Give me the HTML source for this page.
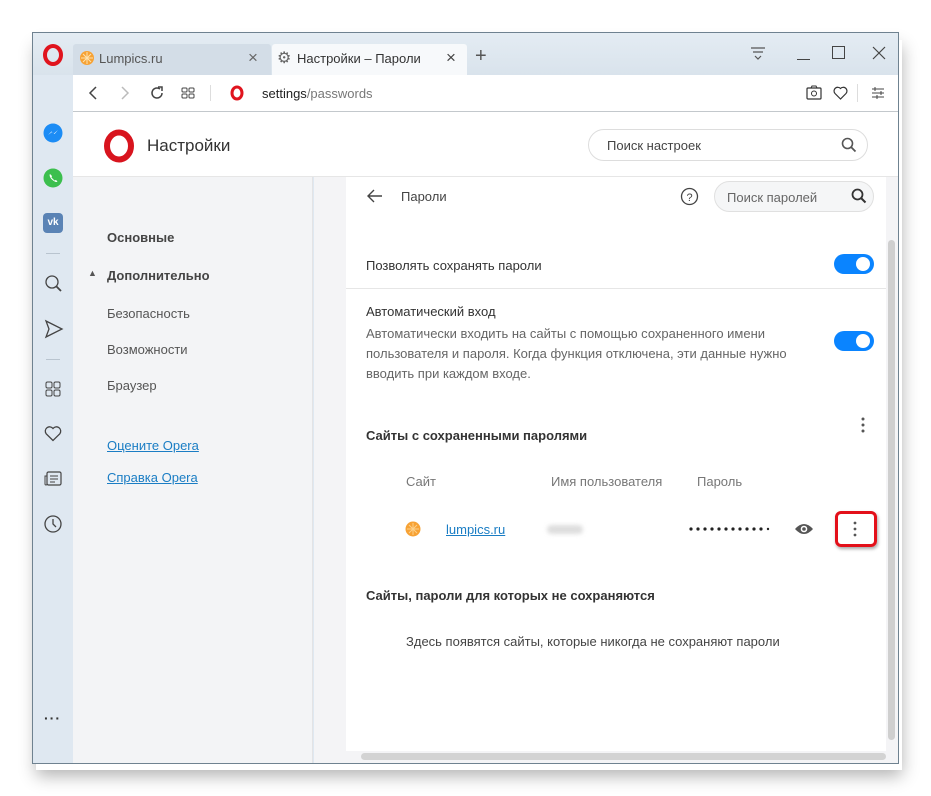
<!DOCTYPE html>
<html><head><meta charset="utf-8"><style>
*{margin:0;padding:0;box-sizing:border-box}
body{width:931px;height:796px;background:#fff;position:relative;overflow:hidden;font-family:"Liberation Sans","Noto Sans CJK SC",sans-serif;color:#333}
.a{position:absolute}
.t{position:absolute;white-space:nowrap;font-size:13px}
svg{position:absolute;overflow:visible}
</style></head><body>
<div class="a" style="left:36px;top:40px;width:866px;height:730px;box-shadow:0 6px 16px rgba(0,0,0,.3)"></div>
<div class="a" style="left:32px;top:32px;width:867px;height:732px;border:1px solid #6f8290;background:#dfe8f1"></div>
<div class="a" style="left:33px;top:33px;width:865px;height:42px;background:linear-gradient(#e4ecf3,#d9e3ec)"></div>
<svg style="left:43px;top:44px" width="20" height="22"><ellipse cx="10" cy="11" rx="8" ry="9" fill="none" stroke="#e0141e" stroke-width="4"/></svg>
<div class="a" style="left:73px;top:44px;width:198px;height:31px;background:#d3dde7;border-radius:3px 3px 0 0"></div>
<svg style="left:79px;top:50px" width="16" height="16"><circle cx="8" cy="8" r="7" fill="#f7a234"/><path d="M8 2v12M2 8h12M4 4l8 8M12 4l-8 8" stroke="#fde2b0" stroke-width="1"/></svg>
<div class="t" style="left:99px;top:51px;color:#555">Lumpics.ru</div>
<div class="t" style="left:248px;top:48px;font-size:17px;color:#666">×</div>
<div class="a" style="left:272px;top:44px;width:195px;height:31px;background:#f7f9fb;border-radius:3px 3px 0 0"></div>
<div class="t" style="left:277px;top:48px;font-size:16px;color:#666">⚙</div>
<div class="t" style="left:297px;top:51px;color:#333">Настройки – Пароли</div>
<div class="t" style="left:446px;top:48px;font-size:17px;color:#444">×</div>
<div class="t" style="left:475px;top:45px;font-size:20px;color:#555">+</div>
<svg style="left:750px;top:46px" width="16" height="14"><path d="M1 2h14M3 6h10M5 10l3 3 3-3" stroke="#555" fill="none" stroke-width="1.2"/></svg>
<div class="a" style="left:797px;top:59px;width:13px;height:1px;background:#444"></div>
<div class="a" style="left:832px;top:46px;width:13px;height:13px;border:1px solid #444"></div>
<svg style="left:872px;top:46px" width="14" height="14"><path d="M1 1l12 12M13 1L1 13" stroke="#444" stroke-width="1.2"/></svg>
<div class="a" style="left:73px;top:75px;width:825px;height:37px;background:#fff;border-bottom:1px solid #c3c8cc"></div>
<svg style="left:88px;top:86px" width="10" height="14"><path d="M8 1L2 7l6 6" stroke="#444" fill="none" stroke-width="1.5"/></svg>
<svg style="left:120px;top:86px" width="10" height="14"><path d="M2 1l6 6-6 6" stroke="#bbb" fill="none" stroke-width="1.5"/></svg>
<svg style="left:149px;top:85px" width="16" height="16"><path d="M13 8a5 5 0 1 1-2-4" stroke="#444" fill="none" stroke-width="1.5"/><path d="M9 2h4v4" stroke="#444" fill="none" stroke-width="1.5"/></svg>
<svg style="left:181px;top:87px" width="14" height="12"><rect x="1" y="1" width="5" height="4" rx="1" fill="none" stroke="#444"/><rect x="8" y="1" width="5" height="4" rx="1" fill="none" stroke="#444"/><rect x="1" y="7" width="5" height="4" rx="1" fill="none" stroke="#444"/><rect x="8" y="7" width="5" height="4" rx="1" fill="none" stroke="#444"/></svg>
<div class="a" style="left:210px;top:85px;width:1px;height:16px;background:#ddd"></div>
<svg style="left:230px;top:85px" width="14" height="16"><ellipse cx="7" cy="8" rx="5" ry="6" fill="none" stroke="#e0141e" stroke-width="3"/></svg>
<div class="t" style="left:262px;top:86px;color:#222">settings<span style="color:#777">/passwords</span></div>
<svg style="left:806px;top:85px" width="16" height="15"><rect x="1" y="3" width="14" height="11" rx="1" fill="none" stroke="#333" stroke-width="1.2"/><circle cx="8" cy="8.5" r="2.5" fill="none" stroke="#333"/><path d="M5 3l1-2h4l1 2" stroke="#333" fill="none"/></svg>
<svg style="left:833px;top:86px" width="15" height="14"><path d="M7.5 13L2 7.5A3.3 3.3 0 0 1 7.5 2.5 3.3 3.3 0 0 1 13 7.5z" stroke="#333" fill="none" stroke-width="1.2"/></svg>
<div class="a" style="left:857px;top:84px;width:1px;height:18px;background:#ddd"></div>
<svg style="left:871px;top:86px" width="14" height="14"><path d="M1 3h12M1 7h12M1 11h12M4 1v4M10 5v4M6 9v4" stroke="#444" stroke-width="1"/></svg>
<svg style="left:43px;top:123px" width="20" height="20"><circle cx="10" cy="10" r="9.5" fill="#1c8cf5"/><path d="M5 12l3.5-3.5 2.5 2 4-3.5-3.5 4-2.5-2z" fill="#fff"/></svg>
<svg style="left:43px;top:168px" width="20" height="20"><circle cx="10" cy="10" r="9.5" fill="#3cbf4e"/><path d="M7 6c-1 1 0 4 2.5 6s4 2.5 5 1.5l-1.5-1.5-1.5.5-3-3 .5-1.5z" fill="#fff"/></svg>
<div class="a" style="left:43px;top:213px;width:20px;height:20px;background:#5a83b5;border-radius:4px;color:#fff;font-size:10px;font-weight:bold;text-align:center;line-height:20px">vk</div>
<div class="a" style="left:46px;top:253px;width:14px;height:1px;background:#b9c4cf"></div>
<svg style="left:44px;top:274px" width="20" height="20"><circle cx="8" cy="8" r="6" fill="none" stroke="#444" stroke-width="1.3"/><path d="M12.5 12.5L17 17" stroke="#444" stroke-width="1.8"/></svg>
<svg style="left:44px;top:319px" width="20" height="20"><path d="M2 2l16 8-16 8 3-8z" stroke="#444" fill="none" stroke-width="1.3"/></svg>
<div class="a" style="left:46px;top:359px;width:14px;height:1px;background:#b9c4cf"></div>
<svg style="left:45px;top:381px" width="16" height="16"><rect x="1" y="1" width="6" height="6" rx="1.5" fill="none" stroke="#444"/><rect x="9" y="1" width="6" height="6" rx="1.5" fill="none" stroke="#444"/><rect x="1" y="9" width="6" height="6" rx="1.5" fill="none" stroke="#444"/><rect x="9" y="9" width="6" height="6" rx="1.5" fill="none" stroke="#444"/></svg>
<svg style="left:44px;top:425px" width="18" height="17"><path d="M9 15.5L2.2 8.8A3.8 3.8 0 0 1 9 3.5 3.8 3.8 0 0 1 15.8 8.8z" stroke="#444" fill="none" stroke-width="1.3"/></svg>
<svg style="left:44px;top:471px" width="18" height="16"><rect x="3" y="1" width="14" height="13" rx="1.5" fill="none" stroke="#444" stroke-width="1.2"/><path d="M3 5H1v8a1 1 0 0 0 2 0M6 5h8M6 8h8M6 11h5" stroke="#444" fill="none"/></svg>
<svg style="left:43px;top:514px" width="20" height="20"><circle cx="10" cy="10" r="8" fill="none" stroke="#444" stroke-width="1.3"/><path d="M10 5v5l3 3" stroke="#444" fill="none" stroke-width="1.3"/></svg>
<div class="t" style="left:44px;top:710px;font-size:14px;color:#333;letter-spacing:1px;font-weight:bold">···</div>
<div class="a" style="left:73px;top:112px;width:825px;height:65px;background:#fff;border-bottom:1px solid #e6e6e6"></div>
<svg style="left:103px;top:130px" width="32" height="32"><ellipse cx="16" cy="16" rx="12" ry="13.5" fill="none" stroke="#d8141e" stroke-width="6"/></svg>
<div class="t" style="left:147px;top:136px;font-size:17px;color:#333">Настройки</div>
<div class="a" style="left:588px;top:129px;width:280px;height:32px;border:1px solid #ddd;border-radius:16px;background:#fff"></div>
<div class="t" style="left:607px;top:138px;color:#444">Поиск настроек</div>
<svg style="left:841px;top:137px" width="16" height="16"><circle cx="6.5" cy="6.5" r="5" fill="none" stroke="#555" stroke-width="1.6"/><path d="M10 10l4.5 4.5" stroke="#555" stroke-width="1.8"/></svg>
<div class="a" style="left:73px;top:177px;width:240px;height:586px;background:#f3f4f6;border-right:1px solid #e3e3e5"></div>
<div class="a" style="left:314px;top:177px;width:584px;height:586px;background:#f4f4f6"></div>
<div class="t" style="left:107px;top:230px;font-weight:bold;color:#444">Основные</div>
<div class="t" style="left:88px;top:268px;font-size:9px;color:#555">▲</div>
<div class="t" style="left:107px;top:268px;font-weight:bold;color:#444">Дополнительно</div>
<div class="t" style="left:107px;top:306px;color:#555">Безопасность</div>
<div class="t" style="left:107px;top:342px;color:#555">Возможности</div>
<div class="t" style="left:107px;top:378px;color:#555">Браузер</div>
<div class="t" style="left:107px;top:438px;color:#1a7dc4;text-decoration:underline">Оцените Opera</div>
<div class="t" style="left:107px;top:470px;color:#1a7dc4;text-decoration:underline">Справка Opera</div>
<div class="a" style="left:346px;top:177px;width:540px;height:574px;background:#fff"></div>
<svg style="left:367px;top:189px" width="16" height="14"><path d="M15 7H2M7 1L1 7l6 6" stroke="#444" fill="none" stroke-width="1.4"/></svg>
<div class="t" style="left:401px;top:189px;color:#444">Пароли</div>
<svg style="left:680px;top:187px" width="19" height="19"><circle cx="9.5" cy="9.5" r="8" fill="none" stroke="#444" stroke-width="1.3"/><text x="9.5" y="14" font-size="11" text-anchor="middle" fill="#444" font-family="Liberation Sans">?</text></svg>
<div class="a" style="left:714px;top:181px;width:160px;height:31px;border:1px solid #e0e0e0;border-radius:16px;background:#f5f6f7"></div>
<div class="t" style="left:727px;top:190px;color:#666">Поиск паролей</div>
<svg style="left:851px;top:188px" width="16" height="16"><circle cx="6.5" cy="6.5" r="5" fill="none" stroke="#333" stroke-width="1.8"/><path d="M10 10l4.5 4.5" stroke="#333" stroke-width="2"/></svg>
<div class="t" style="left:366px;top:258px;color:#333">Позволять сохранять пароли</div>
<div class="a" style="left:834px;top:254px;width:40px;height:20px;border-radius:10px;background:#0a84ff"></div>
<div class="a" style="left:856px;top:257px;width:14px;height:14px;border-radius:7px;background:#fff"></div>
<div class="a" style="left:346px;top:288px;width:540px;height:1px;background:#e6e6e6"></div>
<div class="t" style="left:366px;top:304px;color:#333">Автоматический вход</div>
<div class="t" style="left:366px;top:324px;color:#666;line-height:20px">Автоматически входить на сайты с помощью сохраненного имени<br>пользователя и пароля. Когда функция отключена, эти данные нужно<br>вводить при каждом входе.</div>
<div class="a" style="left:834px;top:331px;width:40px;height:20px;border-radius:10px;background:#0a84ff"></div>
<div class="a" style="left:856px;top:334px;width:14px;height:14px;border-radius:7px;background:#fff"></div>
<div class="t" style="left:366px;top:428px;color:#333;font-weight:600">Сайты с сохраненными паролями</div>
<svg style="left:861px;top:417px" width="4" height="16"><circle cx="2" cy="2" r="1.5" fill="#555"/><circle cx="2" cy="8" r="1.5" fill="#555"/><circle cx="2" cy="14" r="1.5" fill="#555"/></svg>
<div class="t" style="left:406px;top:474px;color:#777">Сайт</div>
<div class="t" style="left:551px;top:474px;color:#777">Имя пользователя</div>
<div class="t" style="left:697px;top:474px;color:#777">Пароль</div>
<svg style="left:405px;top:521px" width="16" height="16"><circle cx="8" cy="8" r="7.5" fill="#f7a234"/><path d="M8 2v12M2 8h12M4 4l8 8M12 4l-8 8" stroke="#fcd08a" stroke-width="1"/></svg>
<div class="t" style="left:446px;top:522px;color:#1a7dc4;text-decoration:underline">lumpics.ru</div>
<div class="a" style="left:547px;top:525px;width:36px;height:9px;border-radius:5px;background:#ddd;filter:blur(2px)"></div>
<svg style="left:689px;top:526px" width="82" height="6"><g fill="#222"><circle cx="2" cy="3" r="1.6"/><circle cx="9" cy="3" r="1.6"/><circle cx="16" cy="3" r="1.6"/><circle cx="23" cy="3" r="1.6"/><circle cx="30" cy="3" r="1.6"/><circle cx="37" cy="3" r="1.6"/><circle cx="44" cy="3" r="1.6"/><circle cx="51" cy="3" r="1.6"/><circle cx="58" cy="3" r="1.6"/><circle cx="65" cy="3" r="1.6"/><circle cx="72" cy="3" r="1.6"/><circle cx="79" cy="3" r="1.2"/></g></svg>
<svg style="left:794px;top:522px" width="20" height="14"><path d="M1 7Q10-3 19 7 10 17 1 7z" fill="#555"/><circle cx="10" cy="7" r="3.3" fill="#fff"/><circle cx="10" cy="7" r="1.8" fill="#555"/></svg>
<div class="a" style="left:835px;top:511px;width:42px;height:36px;border:3px solid #e3101a;border-radius:6px;box-shadow:1px 2px 3px rgba(0,0,0,.35)"></div>
<svg style="left:853px;top:521px" width="4" height="16"><circle cx="2" cy="2" r="1.4" fill="#555"/><circle cx="2" cy="8" r="1.4" fill="#555"/><circle cx="2" cy="14" r="1.4" fill="#555"/></svg>
<div class="t" style="left:366px;top:588px;color:#333;font-weight:600">Сайты, пароли для которых не сохраняются</div>
<div class="t" style="left:406px;top:634px;color:#444">Здесь появятся сайты, которые никогда не сохраняют пароли</div>
<div class="a" style="left:888px;top:240px;width:7px;height:500px;border-radius:4px;background:#cfcfcf"></div>
<div class="a" style="left:361px;top:753px;width:525px;height:7px;border-radius:4px;background:#d3d3d3"></div>
</body></html>
